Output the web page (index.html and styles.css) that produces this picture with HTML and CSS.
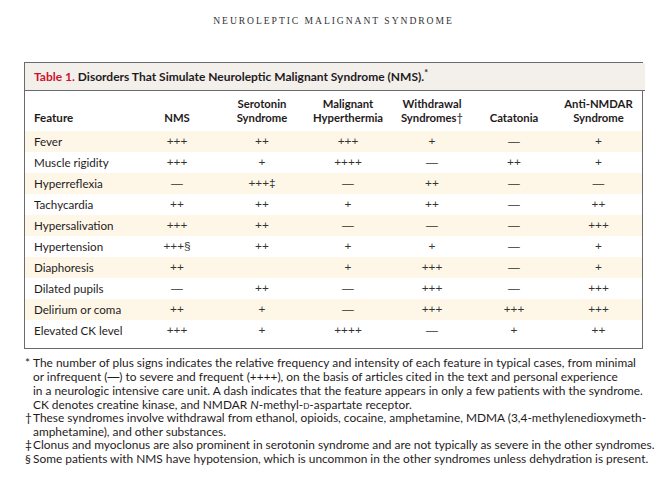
FILE: index.html
```html
<!DOCTYPE html>
<html lang="en">
<head>
    <meta charset="UTF-8">
    <meta name="viewport" content="width=device-width, initial-scale=1.0">
    <title>Neuroleptic Malignant Syndrome</title>
    <link rel="stylesheet" href="styles.css">
</head>
<body>
    <div class="page">
        <p class="running-head">Neuroleptic Malignant Syndrome</p>

        <div class="table-box">
            <div class="table-title"><span class="table-num">Table 1.</span> Disorders That Simulate Neuroleptic Malignant Syndrome (NMS).<sup>*</sup></div>
            <table class="ddx">
                <colgroup>
                    <col style="width:110px">
                    <col style="width:84px">
                    <col style="width:86px">
                    <col style="width:86px">
                    <col style="width:82px">
                    <col style="width:82px">
                    <col style="width:87px">
                </colgroup>
                <thead>
                    <tr>
                        <th class="feature">Feature</th>
                        <th>NMS</th>
                        <th>Serotonin<br>Syndrome</th>
                        <th>Malignant<br>Hyperthermia</th>
                        <th>Withdrawal<br>Syndromes<span class="mark">†</span></th>
                        <th>Catatonia</th>
                        <th>Anti-NMDAR<br>Syndrome</th>
                    </tr>
                </thead>
                <tbody>
                    <tr><td class="feature">Fever</td><td>+++</td><td>++</td><td>+++</td><td>+</td><td>—</td><td>+</td></tr>
                    <tr><td class="feature">Muscle rigidity</td><td>+++</td><td>+</td><td>++++</td><td>—</td><td>++</td><td>+</td></tr>
                    <tr><td class="feature">Hyperreflexia</td><td>—</td><td>+++<span class="mark">‡</span></td><td>—</td><td>++</td><td>—</td><td>—</td></tr>
                    <tr><td class="feature">Tachycardia</td><td>++</td><td>++</td><td>+</td><td>++</td><td>—</td><td>++</td></tr>
                    <tr><td class="feature">Hypersalivation</td><td>+++</td><td>++</td><td>—</td><td>—</td><td>—</td><td>+++</td></tr>
                    <tr><td class="feature">Hypertension</td><td>+++<span class="mark">§</span></td><td>++</td><td>+</td><td>+</td><td>—</td><td>+</td></tr>
                    <tr><td class="feature">Diaphoresis</td><td>++</td><td></td><td>+</td><td>+++</td><td>—</td><td>+</td></tr>
                    <tr><td class="feature">Dilated pupils</td><td>—</td><td>++</td><td>—</td><td>+++</td><td>—</td><td>+++</td></tr>
                    <tr><td class="feature">Delirium or coma</td><td>++</td><td>+</td><td>—</td><td>+++</td><td>+++</td><td>+++</td></tr>
                    <tr><td class="feature">Elevated CK level</td><td>+++</td><td>+</td><td>++++</td><td>—</td><td>+</td><td>++</td></tr>
                </tbody>
            </table>
        </div>

        <div class="notes">
            <p><span class="sym">*</span>The number of plus signs indicates the relative frequency and intensity of each feature in typical cases, from minimal<br>or infrequent (<span class="dash">—</span>) to severe and frequent (++++), on the basis of articles cited in the text and personal experience<br>in a neurologic intensive care unit. A dash indicates that the feature appears in only a few patients with the syndrome.<br>CK denotes creatine kinase, and NMDAR <i>N</i>-methyl-<span class="sc">d</span>-aspartate receptor.</p>
            <p><span class="sym">†</span>These syndromes involve withdrawal from ethanol, opioids, cocaine, amphetamine, MDMA (3,4-methylenedioxymeth-<br>amphetamine), and other substances.</p>
            <p><span class="sym">‡</span>Clonus and myoclonus are also prominent in serotonin syndrome and are not typically as severe in the other syndromes.</p>
            <p><span class="sym">§</span>Some patients with NMS have hypotension, which is uncommon in the other syndromes unless dehydration is present.</p>
        </div>
    </div>
</body>
</html>
```

FILE: styles.css
```css
body {
    margin: 0;
    background-color: #ffffff;
    color: #1f1b1c;
    font-family: Lato, "Open Sans", sans-serif;
}
.page {
    width: 619px;
    margin-left: 24px;
    padding-top: 13px;
}
.running-head {
    margin: 0 0 34px 0;
    text-align: center;
    font-family: "Liberation Serif", serif;
    font-size: 9.6px;
    letter-spacing: 1.95px;
    text-transform: uppercase;
    line-height: 15px;
    color: #333;
}
.table-box {
    border: 1px solid #6b6b6b;
}
.table-title {
    background-color: #f3f0eb;
    border-bottom: 1px solid #6b6b6b;
    margin-right: -3px;
    padding: 6px 0 6px 9px;
    font-size: 12px;
    font-weight: bold;
    line-height: 15px;
}
.table-title sup {
    font-size: 9px;
    line-height: 0;
}
.table-num {
    color: #d0112b;
}
.ddx {
    width: 617px;
    border-collapse: collapse;
    table-layout: fixed;
    font-size: 11.5px;
    margin-bottom: 7px;
}
.ddx th {
    font-weight: bold;
    font-size: 11.3px;
    text-align: center;
    vertical-align: bottom;
    line-height: 14px;
    padding: 6px 0 6px 0;
}
.ddx td {
    text-align: center;
    height: 21px;
    padding: 0;
    line-height: 21px;
    font-family: "Liberation Sans", sans-serif;
    font-size: 11.8px;
    color: #333;
}
.ddx .feature {
    text-align: left;
    padding-left: 9px;
    font-family: Lato, "Open Sans", sans-serif;
    font-size: 11.6px;
    color: #1f1b1c;
}
.ddx tbody tr:nth-child(odd) {
    background-color: #fef7e8;
}
.mark {
    font-weight: normal;
}
.notes {
    margin-top: 7px;
    font-size: 11.9px;
    line-height: 13.5px;
}
.notes p {
    margin: 0;
    padding-left: 9px;
    text-indent: -8px;
    white-space: nowrap;
}
.sym {
    display: inline-block;
    width: 8px;
    text-indent: 0;
}
.dash {
    font-family: "Liberation Sans", sans-serif;
}
.sc {
    font-variant: small-caps;
}
```
